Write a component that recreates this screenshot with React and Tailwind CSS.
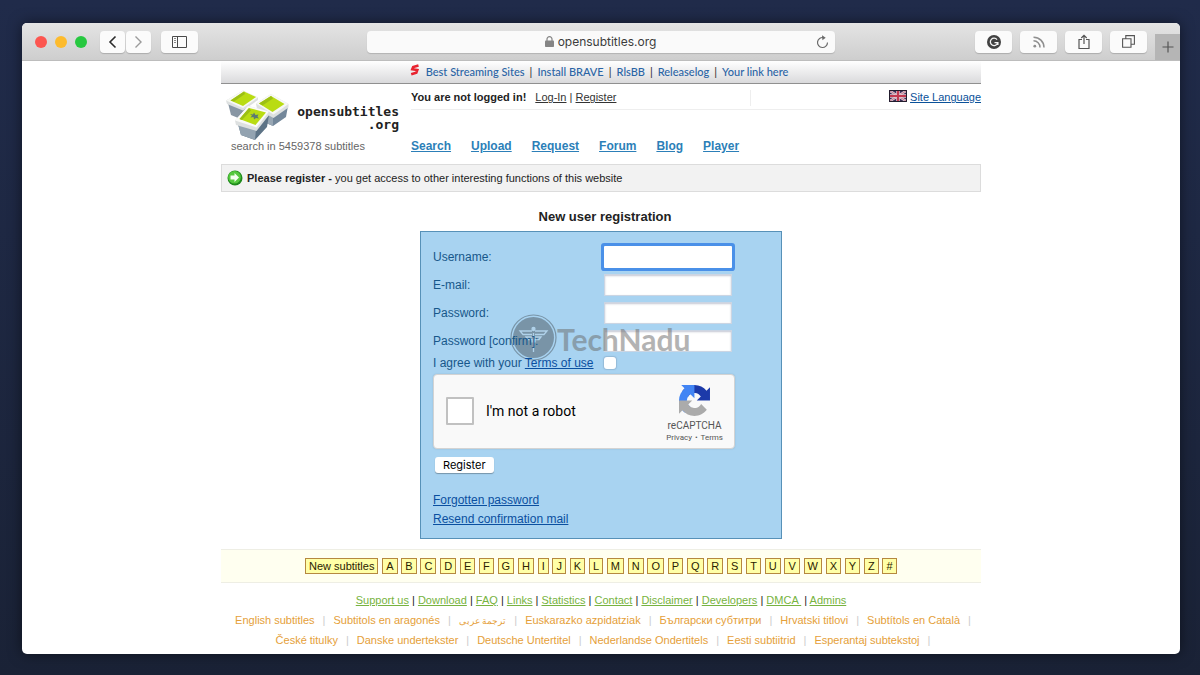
import React from "react";

const sponsorLinks = ["Best Streaming Sites", "Install BRAVE", "RlsBB", "Releaselog", "Your link here"];
const navLinks = ["Search", "Upload", "Request", "Forum", "Blog", "Player"];
const letters = [..."ABCDEFGHIJKLMNOPQRSTUVWXYZ#"];
const footerLinks = ["Support us", "Download", "FAQ", "Links", "Statistics", "Contact", "Disclaimer", "Developers", "DMCA ", "Admins"];
const languages = [
  { name: "English subtitles" },
  { name: "Subtitols en aragonés" },
  { name: "ترجمة عربى", small: true },
  { name: "Euskarazko azpidatziak" },
  { name: "Български субтитри" },
  { name: "Hrvatski titlovi" },
  { name: "Subtítols en Català" },
  { name: "České titulky" },
  { name: "Danske undertekster" },
  { name: "Deutsche Untertitel" },
  { name: "Nederlandse Ondertitels" },
  { name: "Eesti subtiitrid" },
  { name: "Esperantaj subtekstoj" },
];
const fields = [
  { id: "username", label: "Username:", type: "text", focused: true },
  { id: "email", label: "E-mail:", type: "email" },
  { id: "password", label: "Password:", type: "password" },
  { id: "confirm", label: "Password [confirm]:", type: "password" },
];

function ToolButton({ label, narrow, children }) {
  return (
    <button
      type="button"
      aria-label={label}
      className={`flex h-[22px] items-center justify-center rounded bg-[#fbfbfb] shadow-[0_1px_1px_rgba(0,0,0,0.18)] ${narrow ? "w-[25px]" : "w-[37px]"}`}
    >
      {children}
    </button>
  );
}

function Toolbar() {
  return (
    <div className="flex h-[38px] items-center border-b border-[#bdbdbd] bg-linear-to-b from-[#e4e4e4] to-[#cecece]">
      <div className="flex flex-1 items-center">
        <div className="ml-[13px] flex gap-2">
          <button type="button" aria-label="Close" className="size-3 rounded-full bg-[#fc5650]" />
          <button type="button" aria-label="Minimize" className="size-3 rounded-full bg-[#fdbb2d]" />
          <button type="button" aria-label="Zoom" className="size-3 rounded-full bg-[#27c840]" />
        </div>
        <div className="ml-[13px] flex gap-px">
          <ToolButton label="Back" narrow>
            <svg width="9" height="14" viewBox="0 0 9 14" fill="none" stroke="#2c2c2c" strokeWidth="1.6"><path d="M7.5 1.5 2 7l5.500 5.500" /></svg>
          </ToolButton>
          <ToolButton label="Forward" narrow>
            <svg width="9" height="14" viewBox="0 0 9 14" fill="none" stroke="#9a9a9a" strokeWidth="1.400"><path d="M1.500 1.500 7 7l-5.500 5.500" /></svg>
          </ToolButton>
        </div>
        <div className="ml-2.5">
          <ToolButton label="Sidebar">
            <svg width="16" height="12" viewBox="0 0 16 12" fill="none" stroke="#4a4a4a"><path d="M.5.5h14v11H.5zM5.500.5v11" /><path d="M2 2.500h2M2 4.500h2M2 6.500h2" stroke="#8a8a8a" /></svg>
          </ToolButton>
        </div>
      </div>
      <div className="flex h-[22px] w-[468px] items-center rounded bg-[#fafafa] px-1.5 shadow-[0_1px_1px_rgba(0,0,0,0.15)]">
        <div className="flex flex-1 items-center justify-center gap-1 pl-3">
          <svg width="9" height="11" viewBox="0 0 9 11"><rect y="4.500" width="9" height="6.500" rx=".8" fill="#858585" /><path d="M2 5V3a2.500 2.300 0 0 1 5 0v2" fill="none" stroke="#858585" strokeWidth="1.200" /></svg>
          <span className="pt-px font-['Inter',sans-serif] text-[12px] text-[#3c3c3c]">opensubtitles.org</span>
        </div>
        <button type="button" aria-label="Reload">
          <svg width="13" height="14" viewBox="0 0 13 14" fill="none" stroke="#6a6a6a" strokeWidth="1.200"><path d="M7.500 2.600A5 5 0 1 0 11.500 7.500" /><path d="M6 .2 9.700 2.800 6.400 5.200z" fill="#6a6a6a" stroke="none" /></svg>
        </button>
      </div>
      <div className="flex flex-1 items-center justify-end gap-2 self-stretch">
        <ToolButton label="Grammar check">
          <svg width="14" height="14" viewBox="0 0 14 14"><circle cx="7" cy="7" r="7" fill="#424242" /><path d="M10 4.700A3.700 3.700 0 1 0 10.500 8.200M7.500 7.700h3.400V10" fill="none" stroke="#f5f5f5" strokeWidth="1.300" /></svg>
        </ToolButton>
        <ToolButton label="Feed">
          <svg width="12" height="12" viewBox="0 0 12 12" fill="none" stroke="#8f8f8f" strokeWidth="1.500"><circle cx="1.800" cy="10.200" r="1.400" fill="#8f8f8f" stroke="none" /><path d="M.5 4.800a6.500 6.500 0 0 1 6.500 6.700M.5 1.200A10.300 10.300 0 0 1 11 11.500" /></svg>
        </ToolButton>
        <ToolButton label="Share">
          <svg width="12" height="16" viewBox="0 0 12 16" fill="none" stroke="#555" strokeWidth="1.200"><path d="M4 5.500H1v9h10v-9H8M6 10V1.500M3.300 4 6 1.300 8.700 4" /></svg>
        </ToolButton>
        <ToolButton label="Tabs">
          <svg width="13" height="13" viewBox="0 0 13 13" fill="none" stroke="#555" strokeWidth="1.100"><path d="M.6 3.800h8.400v8.400H.6zM3.800 3.800V.6h8.600v8.600H9" /></svg>
        </ToolButton>
        <button type="button" aria-label="New tab" className="flex h-[26px] w-[25px] items-center justify-center self-end bg-[#b5b5b5]">
          <svg width="12" height="12" viewBox="0 0 12 12" stroke="#555" strokeWidth="1.200"><path d="M6 .5v11M.5 6h11" /></svg>
        </button>
      </div>
    </div>
  );
}

function LogoMark() {
  return (
    <svg width="65" height="50" viewBox="0 0 65 50" aria-hidden="true">
      <path d="M3 13 6 25l12 5 4-12z" fill="#8896a3" />
      <path d="M1 10.500 18 .5 33 7.500V10L18 20.500 2 14z" fill="#dde0e0" />
      <path d="M1 10.500 18 .5 33 7.500 18 18z" fill="#f7f8f4" />
      <path d="M5.500 10.500 19 1.500 31 7 18 16z" fill="#b9dc12" />
      <path d="M5.500 10.500 19 1.500 20 4 9 11.500z" fill="#9cbf14" />
      <path d="M38 22 41 33l7 3 13-9 2-11-14 9z" fill="#73879a" />
      <path d="m38 22 3 11 7 3V25z" fill="#98a7b4" />
      <path d="M31 13.500 46 4l17.500 10v3.500L48.500 28 32 19z" fill="#dde0e0" />
      <path d="M31 13.500 46 4l17.500 10-15 10.500z" fill="#f7f8f4" />
      <path d="M34 13.500 46 6l13.500 8-12 8z" fill="#b9dc12" />
      <path d="M34 13.500 46 6l2 2.500-10.500 7z" fill="#9cbf14" />
      <path d="m13 34 3 11 14 5 12-13 2-12-12 13z" fill="#5d7386" />
      <path d="m13 34 3 11 14 5 1-11z" fill="#93a3b1" />
      <path d="M10 30.500 23 16l21 5.500V25L31.500 41 11 35z" fill="#dde0e0" />
      <path d="M10 30.500 23 16l21 5.500L31.500 37.500z" fill="#fafaf8" />
      <path d="M14.500 29 24 18l17 4.500L30.500 35z" fill="#b9dc12" />
      <path d="M14.500 29 24 18l2 2.500L17 30z" fill="#9cbf14" />
      <path d="m25 24 3 .5 1-2 1.500 2.500 3-.5-1 2 1.500 2-3-.5-2 1.500-.5-2.500-3 .5 1.500-2z" fill="#5c7a72" />
    </svg>
  );
}

function Header() {
  return (
    <header className="flex h-20">
      <div className="flex w-[190px] flex-col pt-[6px]">
        <a href="#home" className="flex items-start pl-1 text-[#222]">
          <LogoMark />
          <span className="flex flex-1 flex-col items-end pt-[15px] pr-3 text-right font-['DejaVu_Sans_Mono',monospace] text-[13px] leading-[13px] font-bold">
            <span>opensubtitles</span>
            <span>.org</span>
          </span>
        </a>
        <p className="pl-2.5 leading-[12px] text-[#666]">search in 5459378 subtitles</p>
      </div>
      <div className="flex flex-1 flex-col">
        <div className="flex h-[26px] items-center border-b border-[#eee] pt-0.5">
          <div className="flex h-4 w-[340px] items-center border-r border-[#eee]">
            <strong className="mr-[9px]">You are not logged in!</strong>
            <span className="text-[#333]">
              <a href="#login" className="underline">Log-In</a> | <a href="#register" className="underline">Register</a>
            </span>
          </div>
          <div className="flex flex-1 items-center justify-end gap-[3px]">
            <svg width="18" height="12" viewBox="0 0 18 12" className="mb-1" aria-hidden="true">
              <path fill="#3a2f58" d="M0 0h18v12H0z" />
              <path d="m1 1 16 10M17 1 1 11" stroke="#dccad4" strokeWidth="2.500" />
              <path d="m1 1 16 10M17 1 1 11" stroke="#c06a7c" strokeWidth=".8" />
              <path d="M9 1v10M1 6h16" stroke="#e6ccd2" strokeWidth="3.600" />
              <path d="M9 1v10M1 6h16" stroke="#c23a50" strokeWidth="2.200" />
              <path d="M.5.5h17v11H.5z" fill="none" stroke="#221c2c" />
            </svg>
            <a href="#language" className="text-[#0a5199] underline">Site Language</a>
          </div>
        </div>
        <nav className="mt-auto flex gap-5 pb-2 text-[12px] leading-5 font-bold text-[#2c7fb8]">
          {navLinks.map((l) => <a key={l} href={`#${l}`} className="underline">{l}</a>)}
        </nav>
      </div>
    </header>
  );
}

function Captcha() {
  return (
    <div className="mt-[3px] flex h-[75px] w-[302px] items-center justify-between rounded-sm border border-[#d3d3d3] bg-[#f9f9f9] pr-[11px] pl-3 font-['Roboto',sans-serif] shadow-[0_0_2px_rgba(0,0,0,0.12)]">
      <div className="flex items-center gap-3 pb-0.5">
        <input id="robot" type="checkbox" className="size-7 appearance-none rounded-[1px] border-2 border-[#c1c1c1] bg-white" />
        <label htmlFor="robot" className="pt-px text-[14px] text-black">I'm not a robot</label>
      </div>
      <div className="flex flex-col items-center pt-1 text-[#555]">
        <svg width="31" height="31" viewBox="0 0 64 64" aria-hidden="true">
          <path fill="#1c3aa9" d="M64 31.955l-.033-1.370V4.687l-7.160 7.160C50.948 4.674 42.033.093 32.050.093c-10.400 0-19.622 4.960-25.458 12.640l11.736 11.860a15.550 15.550 0 0 1 4.754-5.334c2.050-1.600 4.952-2.906 8.968-2.906.485 0 .860.057 1.135.163 4.976.393 9.288 3.140 11.828 7.124l-8.307 8.307L64 31.953" />
          <path fill="#4285f4" d="M31.862.094l-1.370.033H4.594l7.160 7.160C4.580 13.147 0 22.060 0 32.046c0 10.400 4.960 19.622 12.640 25.458L24.500 45.768a15.550 15.550 0 0 1-5.334-4.754c-1.600-2.050-2.906-4.952-2.906-8.968 0-.485.057-.860.163-1.135.393-4.976 3.140-9.288 7.124-11.828l8.307 8.307L31.860.095" />
          <path fill="#ababab" d="M.001 32.045l.033 1.370v25.898l7.160-7.160c5.860 7.173 14.774 11.754 24.760 11.754 10.400 0 19.622-4.960 25.458-12.640l-11.736-11.860a15.550 15.550 0 0 1-4.754 5.334c-2.050 1.600-4.952 2.906-8.968 2.906-.485 0-.860-.057-1.135-.163-4.976-.393-9.288-3.140-11.828-7.124l8.307-8.307c-10.522.040-22.400.066-27.295-.005" />
        </svg>
        <span className="mt-1 text-[10px] leading-3">reCAPTCHA</span>
        <span className="text-[8px] leading-[11px]"><a href="#privacy">Privacy</a> <span className="mx-px">•</span> <a href="#terms">Terms</a></span>
      </div>
    </div>
  );
}

function Watermark() {
  return (
    <div className="pointer-events-none absolute top-[82px] left-[89px] flex items-center text-[#4b5760] opacity-50" aria-hidden="true">
      <svg width="47" height="47" viewBox="0 0 47 47">
        <circle cx="23.500" cy="23.500" r="22.500" fill="none" stroke="currentColor" strokeWidth="1.200" />
        <circle cx="23.500" cy="23.500" r="20.500" fill="currentColor" />
        <g fill="none" stroke="#b9d2e4" strokeWidth="1.300">
          <path d="M22 17H10l3 3.500h9M22 23h-6l2 2.500h4v3M25 17h12l-3 3.500h-9M25 23h6l-2 2.500h-4v3M23.500 19v19" />
          <circle cx="23.500" cy="15" r="1.500" fill="#b9d2e4" />
        </g>
      </svg>
      <span className="pt-1 font-['Lato',sans-serif] text-[30px] leading-[43px] font-bold text-[#6a6a6a]">TechNadu</span>
    </div>
  );
}

function RegistrationForm() {
  return (
    <form className="relative mx-auto w-[362px] border border-[#5791b8] bg-[#a8d3f1] px-3 pt-[11px] pb-[9px] text-[12px] text-[#17578a]">
      {fields.map((f) => (
        <div key={f.id} className="flex h-7 items-center">
          <label htmlFor={f.id} className="relative z-10 w-[171px]">{f.label}</label>
          <input
            id={f.id}
            type={f.type}
            className={`h-[22px] w-32 bg-white px-1 outline-none ${f.focused ? "rounded-[1px] ring-3 ring-[#4a90e8]" : "border border-[#cbd5e3] shadow-[inset_0_1px_2px_rgba(60,70,110,0.3)]"}`}
          />
        </div>
      ))}
      <div className="flex h-4 items-center">
        <label htmlFor="agree" className="relative z-10 w-[171px]">I agree with your <a href="#terms-of-use" className="text-[#0a4fa0] underline">Terms of use</a></label>
        <input id="agree" type="checkbox" className="size-3 appearance-none rounded-[3px] bg-white shadow-[0_0_1px_1px_rgba(90,110,140,0.25)]" />
      </div>
      <Captcha />
      <button type="submit" className="mt-2 ml-0.5 block h-4 rounded-[3px] bg-white px-2 font-['Inter',sans-serif] text-[11px] leading-4 text-black shadow-[0_1px_1px_rgba(0,0,0,0.3)]">Register</button>
      <div className="mt-[18px] flex flex-col items-start leading-[19px] text-[#0a4fa0]">
        <a href="#forgotten" className="underline">Forgotten password</a>
        <a href="#resend" className="underline">Resend confirmation mail</a>
      </div>
      <Watermark />
    </form>
  );
}

function Separated({ items }) {
  return items.map((l, i) => (
    <React.Fragment key={l}>
      {i > 0 && " | "}
      <a href={`#${l.trim()}`} className="text-[#77b340] underline">{l}</a>
    </React.Fragment>
  ));
}

export default function App() {
  return (
    <div className="min-h-screen bg-linear-to-b from-[#202b4a] to-[#1a2236] pt-[23px] pr-5 pb-[21px] pl-[22px] font-['Liberation_Sans',Arial,sans-serif] text-[11px] text-[#222]">
      <div className="overflow-hidden rounded-[5px] bg-white shadow-[0_0_14px_rgba(0,0,0,0.5)]">
        <Toolbar />
        <main className="mx-auto max-w-[760px] pb-1">
          <div className="flex h-[23px] items-center justify-center border-b border-[#909090] bg-linear-to-b from-white to-[#dadadc] pr-1 font-['Lato',sans-serif] text-[11px] font-medium text-[#2a64a5]">
            <svg width="10" height="12" viewBox="0 0 10 12" className="mr-1.5 mb-1" aria-hidden="true">
              <path d="M8.500 1.500 3.200 3 2.300 5.200l5 .8-1 2.800L1.200 10.300" fill="none" stroke="#e8232f" strokeWidth="2.600" />
            </svg>
            {sponsorLinks.map((l, i) => (
              <React.Fragment key={l}>
                {i > 0 && <span className="mx-[5px] text-[#333]">|</span>}
                <a href={`#${l}`}>{l}</a>
              </React.Fragment>
            ))}
          </div>
          <Header />
          <div className="flex h-7 items-center gap-1 border border-[#dcdcdc] bg-[#f2f2f2] pl-[5px]">
            <svg width="16" height="16" viewBox="0 0 16 16" aria-hidden="true">
              <circle cx="8" cy="8" r="7.500" fill="#1f8a1c" />
              <circle cx="7.500" cy="7.200" r="6.300" fill="#55c83e" />
              <path d="M3.500 5.500h4V3L12 7.500 7.500 12V9.500h-4z" fill="#f4fff0" />
            </svg>
            <p><strong>Please register -</strong> you get access to other interesting functions of this website</p>
          </div>
          <h1 className="mt-[15px] mb-1 pl-2 text-center text-[13px] leading-5 font-bold">New user registration</h1>
          <RegistrationForm />
          <div className="mt-2.5 flex h-[34px] items-center justify-center border-y border-[#eeeee4] bg-[#fffff0] text-[#2b2200]">
            <div className="flex w-[592px] justify-between">
              {["New subtitles", ...letters].map((l) => (
                <a key={l} href={`#${l}`} className="h-4 border border-[#b5883f] bg-[#ffffa6] px-[3px] leading-[14px] whitespace-nowrap">{l}</a>
              ))}
            </div>
          </div>
          <footer className="mt-[7px] leading-5">
            <p className="text-center whitespace-pre-wrap"><Separated items={footerLinks} /></p>
            <div className="flex flex-wrap justify-center pl-3 text-[#e5a039]">
              {languages.map((l) => (
                <span key={l.name} className="h-5">
                  <a href={`#${l.name}`} className={l.small ? "text-[9px]" : ""}>{l.name}</a>
                  <span className="mx-2 text-[#ccc]">|</span>
                </span>
              ))}
            </div>
          </footer>
        </main>
      </div>
    </div>
  );
}
